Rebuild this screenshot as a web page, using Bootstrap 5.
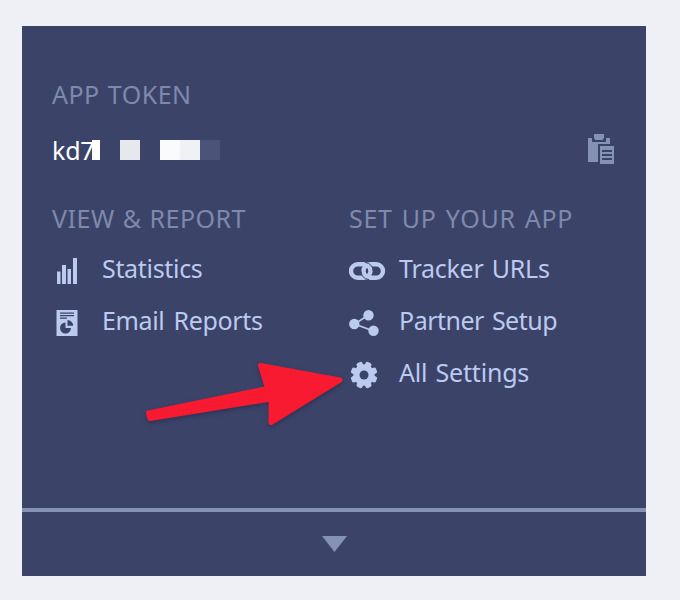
<!DOCTYPE html>
<html lang="en">
<head>
<meta charset="utf-8">
<title>App settings</title>
<link href="https://cdn.jsdelivr.net/npm/bootstrap@5.3.0/dist/css/bootstrap.min.css" rel="stylesheet">
<style>
body{background:#eff0f5;font-family:"Noto Sans","Open Sans",sans-serif;font-size:25px;line-height:52px;height:600px;overflow:hidden}
.app-panel{width:624px;height:550px;margin:26px 0 0 22px;background:#3b4369}
.panel-main{height:482px;padding:42px 30px 0}
.panel-foot{height:68px;border-top:4px solid #8592b4}
.heading{font-size:25px;font-weight:400;line-height:52px;margin:0;color:#7e8aad;white-space:nowrap}
.token-row{height:60px}
.token-text{width:40px;line-height:60px;color:#fff;white-space:nowrap;letter-spacing:-.2px}
.mask{width:128px;height:20px}
.copy-btn{margin-bottom:2px}
.menu-left{width:297px}
.menus{padding-top:12px}
.menu-item{height:52px;line-height:49px;color:#bccaf0;text-decoration:none;white-space:nowrap}
.menu-icon{width:50px;height:52px;flex:none}
.pointer-arrow{left:0;top:0;pointer-events:none;filter:drop-shadow(0 2px 2px rgba(20,24,50,.4))}
.w-token{letter-spacing:.5px;word-spacing:1px}
.w-view{letter-spacing:.5px;word-spacing:1px}
.w-setup{letter-spacing:.7px;word-spacing:2px}
.t1{letter-spacing:-.32px}
.t2{letter-spacing:-.35px;word-spacing:3px}
.t3{letter-spacing:-.25px;word-spacing:2px}
.t4{letter-spacing:-.5px;word-spacing:2px}
.t5{letter-spacing:-.2px;word-spacing:2px}
</style>
<script src="https://cdn.jsdelivr.net/npm/bootstrap@5.3.0/dist/js/bootstrap.bundle.min.js"></script>
</head>
<body class="position-relative">
<main class="app-panel d-flex flex-column">
  <section class="panel-main">
    <h2 class="heading"><span class="w-token">APP TOKEN</span></h2>
    <div class="token-row d-flex align-items-center">
      <span class="token-text"><span>kd7</span></span>
      <svg class="mask" viewBox="0 0 128 20" shape-rendering="crispEdges"><path fill="#fff" d="M0 0h8v20H0z"/><path fill="#e6e8ee" d="M28 0h20v20H28z"/><path fill="#fafbfd" d="M68 0h20v20H68z"/><path fill="#eff1f5" d="M88 0h20v20H88z"/><path fill="#4b5478" d="M108 0h20v20H108z"/></svg>
      <button class="copy-btn btn p-0 border-0 ms-auto d-flex" aria-label="Copy token"><svg width="28" height="32" viewBox="0 0 28 32"><path fill="#8592b4" d="M0 5h4v4h14V5h4v6H10v18H0zM6 1h10v4l-1.500 2h-7L6 5z"/><path fill="#8592b4" fill-rule="evenodd" d="M12 13h14v18H12zM14 17v2h10v-2zm0 4v2h10v-2zm0 4v2h10v-2z"/></svg></button>
    </div>
    <div class="menus d-flex">
      <nav class="menu-left">
        <h2 class="heading"><span class="w-view">VIEW &amp; REPORT</span></h2>
        <a class="menu-item d-flex" href="#"><svg class="menu-icon" viewBox="0 0 50 52"><path fill="#bccaf0" d="M5 27.500h3.500V40H5zM10 21h4v19h-4zM15.500 25h3.500v15h-3.500zM21 14h4v26h-4z"/></svg><span class="t1">Statistics</span></a>
        <a class="menu-item d-flex" href="#"><svg class="menu-icon" viewBox="0 0 50 52"><path fill="#bccaf0" d="M4.500 14h21v26h-21z"/><path fill="#3b4369" d="M8 16.500h14v1.300H8zM8 19h14v1.300H8zM8 21.500h7v1.300H8zM13.500 26.500v5.500h5.500a5.500 5.500 0 1 1-5.500-5.500zM15.500 24a5.700 5.700 0 0 1 5.700 5.700h-5.700z"/></svg><span class="t2">Email Reports</span></a>
      </nav>
      <nav>
        <h2 class="heading"><span class="w-setup">SET UP YOUR APP</span></h2>
        <a class="menu-item d-flex" href="#"><svg class="menu-icon" viewBox="0 0 50 52"><g fill="none" stroke="#bccaf0" stroke-width="4.400"><rect x="2" y="20.200" width="19.500" height="13.600" rx="6.800"/><rect x="14.500" y="20.200" width="19.500" height="13.600" rx="6.800"/></g><path d="M16 18.300Q24 20 24.200 27M20 35.700Q12 34 11.800 27" fill="none" stroke="#3b4369" stroke-width=".9"/></svg><span class="t3">Tracker URLs</span></a>
        <a class="menu-item d-flex" href="#"><svg class="menu-icon" viewBox="0 0 50 52"><path d="M19.500 19L5.500 28l19 7" fill="none" stroke="#bccaf0" stroke-width="1.600"/><g fill="#bccaf0"><circle cx="19.500" cy="19.200" r="5.200"/><circle cx="5.300" cy="28" r="5.200"/><circle cx="24.500" cy="34.800" r="5.200"/></g></svg><span class="t4">Partner Setup</span></a>
        <a class="menu-item d-flex" href="#"><svg class="menu-icon" viewBox="0 0 50 52"><g transform="translate(15 27)"><g fill="#bccaf0"><circle r="10.700"/><rect x="-3.200" y="-13.500" width="6.400" height="27" rx="2" transform="rotate(22.500)"/><rect x="-3.200" y="-13.500" width="6.400" height="27" rx="2" transform="rotate(67.500)"/><rect x="-3.200" y="-13.500" width="6.400" height="27" rx="2" transform="rotate(112.500)"/><rect x="-3.200" y="-13.500" width="6.400" height="27" rx="2" transform="rotate(157.500)"/></g><circle r="4.500" fill="#3b4369"/></g></svg><span class="t5">All Settings</span></a>
      </nav>
    </div>
  </section>
  <footer class="panel-foot d-flex justify-content-center align-items-center"><svg width="26" height="16" viewBox="0 0 26 16"><path fill="#8592b4" d="M1 0h25L13.500 16z"/></svg></footer>
</main>
<svg class="pointer-arrow position-absolute" width="680" height="600" viewBox="0 0 680 600"><path d="M148.500 413L267.500 388.500L260.500 365.500L340 380L271 422.500V399L150 418.500z" fill="#f71a31" stroke="#f71a31" stroke-width="5" stroke-linejoin="round"/></svg>
</body>
</html>
